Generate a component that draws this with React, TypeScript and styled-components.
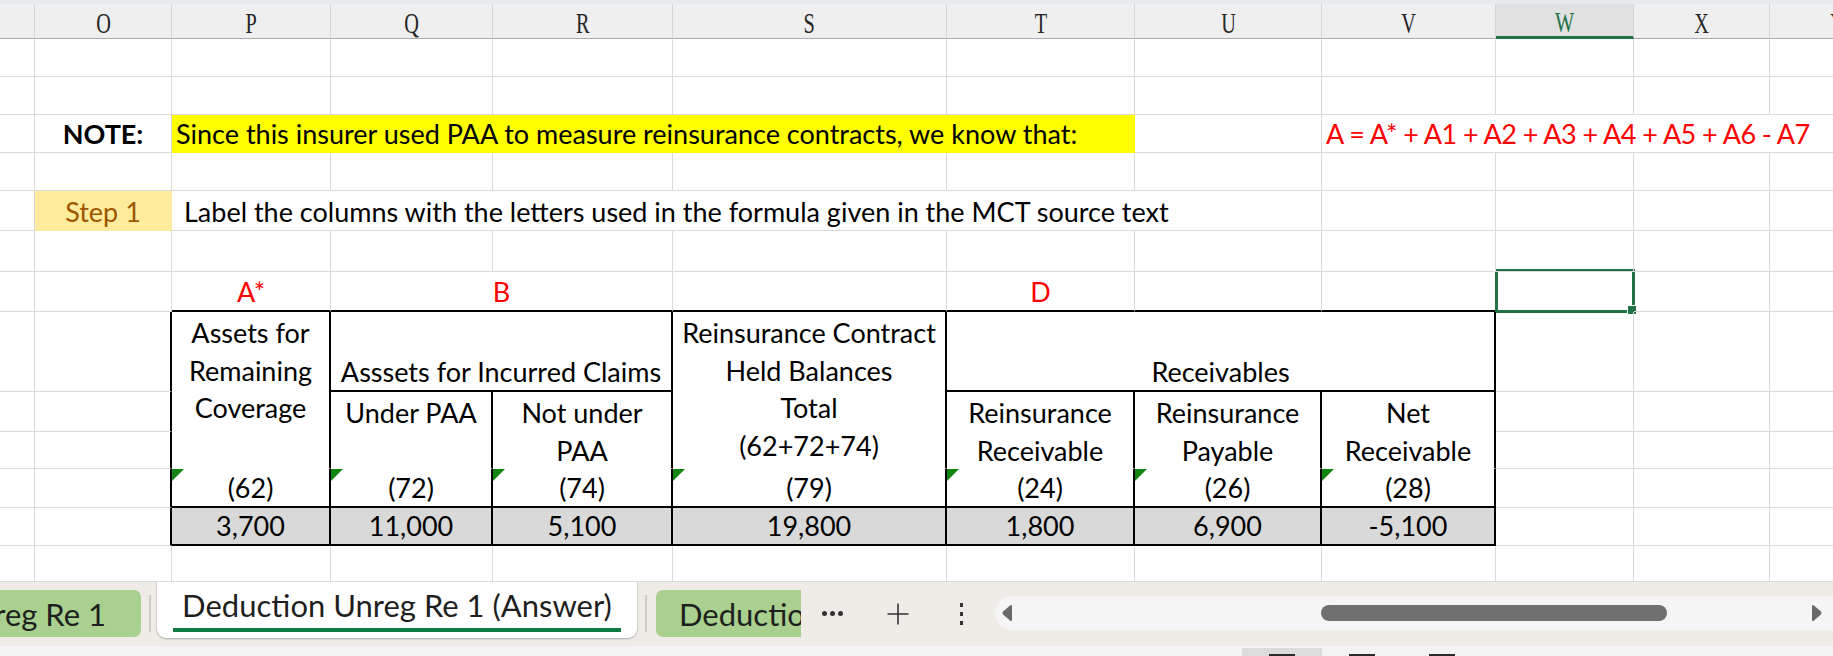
import React from 'react';
import styled, { createGlobalStyle } from 'styled-components';

const COLS = [35, 137, 159, 162, 180, 274, 188, 187, 174, 138, 136, 136];
const LETTERS = ['', 'O', 'P', 'Q', 'R', 'S', 'T', 'U', 'V', 'W', 'X', 'Y'];
const ROWS = [38, 38, 38, 38, 40, 41, 40, 80, 40, 37, 39, 38, 36];
const ACTIVE_COL = 9;
const RED = '#ff0000';
const GREEN = '#217346';

type Line = 'grid' | 'black' | 'none';

type CellDef = {
  c: number;
  r: number;
  cs?: number;
  rs?: number;
  text?: string | string[];
  align?: 'left' | 'center';
  valign?: 'top' | 'bottom';
  fill?: string;
  color?: string;
  bold?: boolean;
  tight?: boolean;
  indent?: number;
  right?: Line;
  bottom?: Line;
  flag?: boolean;
  selected?: boolean;
};

const GlobalStyle = createGlobalStyle`
  html, body {
    margin: 0;
    padding: 0;
    background: #ffffff;
    overflow: hidden;
  }
`;

const lineColor = (l: Line) => (l === 'black' ? '#000000' : l === 'none' ? 'transparent' : '#dadada');
const lineWidth = (l: Line) => (l === 'black' ? 2 : 1);

const tableCols = [2, 3, 4, 5, 6, 7, 8];
const codes = ['(62)', '(72)', '(74)', '(79)', '(24)', '(26)', '(28)'];
const values = ['3,700', '11,000', '5,100', '19,800', '1,800', '6,900', '-5,100'];

const cells: CellDef[] = [
  { c: 1, r: 2, text: 'NOTE:', bold: true },
  {
    c: 2, r: 2, cs: 5, align: 'left', fill: '#ffff00', right: 'none', bottom: 'none',
    text: 'Since this insurer used PAA to measure reinsurance contracts, we know that:',
  },
  { c: 8, r: 2, cs: 4, align: 'left', color: RED, tight: true, text: 'A = A* + A1 + A2 + A3 + A4 + A5 + A6 - A7' },
  { c: 1, r: 4, text: 'Step 1', fill: '#ffeb9c', color: '#9c5700', right: 'none', bottom: 'none' },
  {
    c: 2, r: 4, cs: 6, align: 'left', indent: 12,
    text: 'Label the columns with the letters used in the formula given in the MCT source text',
  },
  { c: 2, r: 6, text: 'A*', color: RED, bottom: 'black' },
  { c: 3, r: 6, cs: 2, text: 'B', color: RED, bottom: 'black' },
  { c: 5, r: 6, bottom: 'black' },
  { c: 6, r: 6, text: 'D', color: RED, bottom: 'black' },
  { c: 7, r: 6, bottom: 'black' },
  { c: 8, r: 6, bottom: 'black' },
  { c: 9, r: 6, selected: true },
  ...[7, 8, 9, 10, 11].map((r) => ({ c: 1, r, right: 'black' as Line })),
  { c: 2, r: 7, rs: 3, valign: 'top', right: 'black', bottom: 'none', text: ['Assets for', 'Remaining', 'Coverage'] },
  { c: 3, r: 7, cs: 2, right: 'black', bottom: 'black', text: 'Asssets for Incurred Claims' },
  {
    c: 5, r: 7, rs: 3, valign: 'top', right: 'black', bottom: 'none',
    text: ['Reinsurance Contract', 'Held Balances', 'Total', '(62+72+74)'],
  },
  { c: 6, r: 7, cs: 3, right: 'black', bottom: 'black', text: 'Receivables' },
  { c: 3, r: 8, rs: 2, valign: 'top', right: 'black', bottom: 'none', text: ['Under PAA'] },
  { c: 4, r: 8, rs: 2, valign: 'top', right: 'black', bottom: 'none', text: ['Not under', 'PAA'] },
  { c: 6, r: 8, rs: 2, valign: 'top', right: 'black', bottom: 'none', text: ['Reinsurance', 'Receivable'] },
  { c: 7, r: 8, rs: 2, valign: 'top', right: 'black', bottom: 'none', text: ['Reinsurance', 'Payable'] },
  { c: 8, r: 8, rs: 2, valign: 'top', right: 'black', bottom: 'none', text: ['Net', 'Receivable'] },
  ...tableCols.map((c, i) => ({ c, r: 10, text: codes[i], flag: true, right: 'black' as Line, bottom: 'black' as Line })),
  ...tableCols.map((c, i) => ({ c, r: 11, text: values[i], fill: '#d9d9d9', right: 'black' as Line, bottom: 'black' as Line })),
];

// fill the rest of the sheet with empty cells so the gridlines show
const buildSheet = (): CellDef[] => {
  const taken = ROWS.map(() => COLS.map(() => false));
  cells.forEach((cell) => {
    for (let r = cell.r; r < cell.r + (cell.rs || 1); r++) {
      for (let c = cell.c; c < cell.c + (cell.cs || 1); c++) taken[r][c] = true;
    }
  });
  const all = [...cells];
  ROWS.forEach((_, r) =>
    COLS.forEach((__, c) => {
      if (!taken[r][c]) all.push({ c, r });
    })
  );
  return all;
};

const App = () => {
  const sheet = buildSheet();

  return (
    <>
      <GlobalStyle />
      <Frame>
        <TopStrip />
        <Sheet>
          {LETTERS.map((letter, i) => (
            <ColumnHeader key={letter + i} $active={i === ACTIVE_COL}>
              <HeaderLetter>{letter}</HeaderLetter>
            </ColumnHeader>
          ))}
          {sheet.map((cell) => {
            const lines = cell.text === undefined ? [] : Array.isArray(cell.text) ? cell.text : [cell.text];
            return (
              <Cell
                key={`${cell.r}-${cell.c}`}
                $c={cell.c}
                $r={cell.r}
                $cs={cell.cs || 1}
                $rs={cell.rs || 1}
                $fill={cell.fill}
                $color={cell.color}
                $bold={cell.bold}
                $tight={cell.tight}
                $align={cell.align || 'center'}
                $valign={cell.valign || 'bottom'}
                $indent={cell.indent || 4}
                $right={cell.right || 'grid'}
                $bottom={cell.bottom || 'grid'}
                $flag={cell.flag}
              >
                {lines.map((line) => (
                  <CellLine key={line}>{line}</CellLine>
                ))}
                {cell.selected && (
                  <>
                    <Selection />
                    <FillHandle />
                  </>
                )}
              </Cell>
            );
          })}
        </Sheet>
        <TabBar>
          <ScrolledTab>
            <SheetTab>Deduction Unreg Re 1</SheetTab>
          </ScrolledTab>
          <TabDivider />
          <ActiveTab>
            <ActiveLabel>Deduction Unreg Re 1 (Answer)</ActiveLabel>
          </ActiveTab>
          <TabDivider />
          <ClippedTab>
            <SheetTab>Deduction Unreg Re 2</SheetTab>
          </ClippedTab>
          <BarButton $gap={11}>
            <MoreDots>
              <i />
              <i />
              <i />
            </MoreDots>
          </BarButton>
          <BarButton $gap={26}>
            <svg width="24" height="24" viewBox="0 0 24 24">
              <path d="M12 1.5v21M1.5 12h21" stroke="#333" strokeWidth="1.6" fill="none" />
            </svg>
          </BarButton>
          <BarButton $gap={23}>
            <KebabDots>
              <i />
              <i />
              <i />
            </KebabDots>
          </BarButton>
          <ScrollTrack>
            <svg width="12" height="18" viewBox="0 0 12 18">
              <path d="M10 2 L3 8 Q2 9 3 10 L10 16 Z" fill="#6a6a6a" stroke="#6a6a6a" strokeLinejoin="round" strokeWidth="2" />
            </svg>
            <ScrollThumb />
            <RightArrow width="12" height="18" viewBox="0 0 12 18">
              <path d="M2 2 L9 8 Q10 9 9 10 L2 16 Z" fill="#6a6a6a" stroke="#6a6a6a" strokeLinejoin="round" strokeWidth="2" />
            </RightArrow>
          </ScrollTrack>
        </TabBar>
        <StatusBar>
          <ViewButton $active>
            <ViewIcon />
          </ViewButton>
          <ViewButton>
            <ViewIcon />
          </ViewButton>
          <ViewButton>
            <ViewIcon />
          </ViewButton>
        </StatusBar>
      </Frame>
    </>
  );
};

const Frame = styled.div`
  width: 1833px;
  height: 656px;
  overflow: hidden;
  display: flex;
  flex-direction: column;
  background: #ffffff;
`;

const TopStrip = styled.div`
  height: 4px;
  flex: none;
  background: #e8ebed;
`;

const Sheet = styled.div`
  flex: none;
  display: grid;
  width: max-content;
  grid-template-columns: ${COLS.map((w) => `${w}px`).join(' ')};
  grid-template-rows: 35px ${ROWS.map((h) => `${h}px`).join(' ')};
  font-family: Lato, 'Liberation Sans', sans-serif;
  font-size: 27px;
  color: #000000;
`;

const ColumnHeader = styled.div<{ $active?: boolean }>`
  box-sizing: border-box;
  display: flex;
  align-items: center;
  justify-content: center;
  padding-top: 4px;
  overflow: hidden;
  background: ${(p) => (p.$active ? '#e1e1e1' : '#efefef')};
  border-right: 1px solid #d6d6d6;
  border-bottom: ${(p) => (p.$active ? `3px solid ${GREEN}` : '1px solid #ababab')};
  color: ${(p) => (p.$active ? GREEN : '#262626')};
`;

const HeaderLetter = styled.span`
  display: inline-block;
  font-family: 'Liberation Serif', 'DejaVu Serif', serif;
  font-size: 29px;
  line-height: 29px;
  transform: scaleX(0.7);
`;

type CellProps = {
  $c: number;
  $r: number;
  $cs: number;
  $rs: number;
  $fill?: string;
  $color?: string;
  $bold?: boolean;
  $tight?: boolean;
  $align: 'left' | 'center';
  $valign: 'top' | 'bottom';
  $indent: number;
  $right: Line;
  $bottom: Line;
  $flag?: boolean;
};

const Cell = styled.div<CellProps>`
  position: relative;
  box-sizing: border-box;
  grid-column: ${(p) => `${p.$c + 1} / span ${p.$cs}`};
  grid-row: ${(p) => `${p.$r + 2} / span ${p.$rs}`};
  display: flex;
  flex-direction: column;
  justify-content: ${(p) => (p.$valign === 'top' ? 'flex-start' : 'flex-end')};
  align-items: ${(p) => (p.$align === 'left' ? 'flex-start' : 'center')};
  padding: ${(p) => (p.$valign === 'top' ? '2px' : '0')} 4px 0 ${(p) => (p.$align === 'left' ? p.$indent : 4)}px;
  background: ${(p) => p.$fill || 'transparent'};
  color: ${(p) => p.$color || '#000000'};
  font-weight: ${(p) => (p.$bold ? 700 : 400)};
  letter-spacing: ${(p) => (p.$tight ? '-0.55px' : 'normal')};
  border-right: ${(p) => `${lineWidth(p.$right)}px solid ${lineColor(p.$right)}`};
  border-bottom: ${(p) => `${lineWidth(p.$bottom)}px solid ${lineColor(p.$bottom)}`};
  white-space: nowrap;

  ${(p) =>
    p.$flag &&
    `
    &::before {
      content: '';
      position: absolute;
      top: 0;
      left: 0;
      width: 12px;
      height: 12px;
      background: #138513;
      clip-path: polygon(0 0, 100% 0, 0 100%);
    }
  `}
`;

const CellLine = styled.div`
  line-height: 37.5px;
  height: 37.5px;
`;

const Selection = styled.span`
  position: absolute;
  top: -3px;
  left: -1px;
  right: -2px;
  bottom: -2px;
  border: 3px solid ${GREEN};
  pointer-events: none;
`;

const FillHandle = styled.span`
  position: absolute;
  right: -4px;
  bottom: -4px;
  width: 8px;
  height: 8px;
  background: ${GREEN};
  border: 1px solid #ffffff;
`;

const TabBar = styled.div`
  flex: none;
  height: 64px;
  display: flex;
  align-items: flex-start;
  background: #efebe7;
  font-family: Lato, 'Noto Sans', sans-serif;
  font-size: 31px;
  color: #1f1f1f;
  overflow: hidden;
`;

const SheetTab = styled.div`
  height: 47px;
  display: flex;
  align-items: center;
  flex: none;
  background: #a9d08e;
  white-space: nowrap;
`;

const ScrolledTab = styled.div`
  width: 141px;
  height: 47px;
  margin-top: 8px;
  flex: none;
  display: flex;
  justify-content: flex-end;
  overflow: hidden;
  border-radius: 0 7px 7px 0;

  ${SheetTab} {
    padding-right: 35px;
  }
`;

const ClippedTab = styled.div`
  width: 145px;
  height: 47px;
  margin: 8px 0 0 9px;
  flex: none;
  overflow: hidden;
  border-radius: 7px 0 0 7px;

  ${SheetTab} {
    padding-left: 23px;
  }
`;

const TabDivider = styled.div`
  width: 2px;
  height: 37px;
  margin: 13px 0 0 8px;
  flex: none;
  background: #cfcdca;
`;

const ActiveTab = styled.div`
  width: 480px;
  height: 56px;
  margin-left: 6px;
  flex: none;
  box-sizing: border-box;
  display: flex;
  justify-content: center;
  background: #ffffff;
  border-radius: 0 0 9px 9px;
  box-shadow: 0 1px 2px rgba(0, 0, 0, 0.22), 0 0 0 1px rgba(0, 0, 0, 0.05);
`;

const ActiveLabel = styled.div`
  height: 46px;
  padding: 0 9px;
  display: flex;
  align-items: center;
  white-space: nowrap;
  border-bottom: 4px solid #107c41;
`;

const BarButton = styled.div<{ $gap: number }>`
  width: 40px;
  height: 47px;
  margin: 8px 0 0 ${(p) => p.$gap}px;
  flex: none;
  display: flex;
  align-items: center;
  justify-content: center;
`;

const MoreDots = styled.span`
  display: flex;
  gap: 3px;

  i {
    width: 5px;
    height: 5px;
    border-radius: 50%;
    background: #333333;
  }
`;

const KebabDots = styled.span`
  display: flex;
  flex-direction: column;
  gap: 5px;

  i {
    width: 3px;
    height: 4px;
    background: #333333;
  }
`;

const ScrollTrack = styled.div`
  width: 860px;
  height: 34px;
  margin: 14px 0 0 14px;
  flex: none;
  box-sizing: border-box;
  padding-left: 6px;
  display: flex;
  align-items: center;
  background: #f5f5f5;
  border-radius: 17px;
`;

const ScrollThumb = styled.div`
  width: 346px;
  height: 16px;
  margin-left: 308px;
  border-radius: 8px;
  background: #707070;
`;

const RightArrow = styled.svg`
  margin-left: 144px;
`;

const StatusBar = styled.div`
  flex: 1;
  display: flex;
  align-items: flex-start;
  padding-left: 1242px;
  background: #f3f3f3;
`;

const ViewButton = styled.div<{ $active?: boolean }>`
  width: 80px;
  height: 100%;
  margin-top: 2px;
  display: flex;
  justify-content: center;
  background: ${(p) => (p.$active ? '#dcdcdc' : 'transparent')};
`;

const ViewIcon = styled.span`
  width: 26px;
  height: 10px;
  margin-top: 6px;
  background: #2b2b2b;
`;

export default App;
